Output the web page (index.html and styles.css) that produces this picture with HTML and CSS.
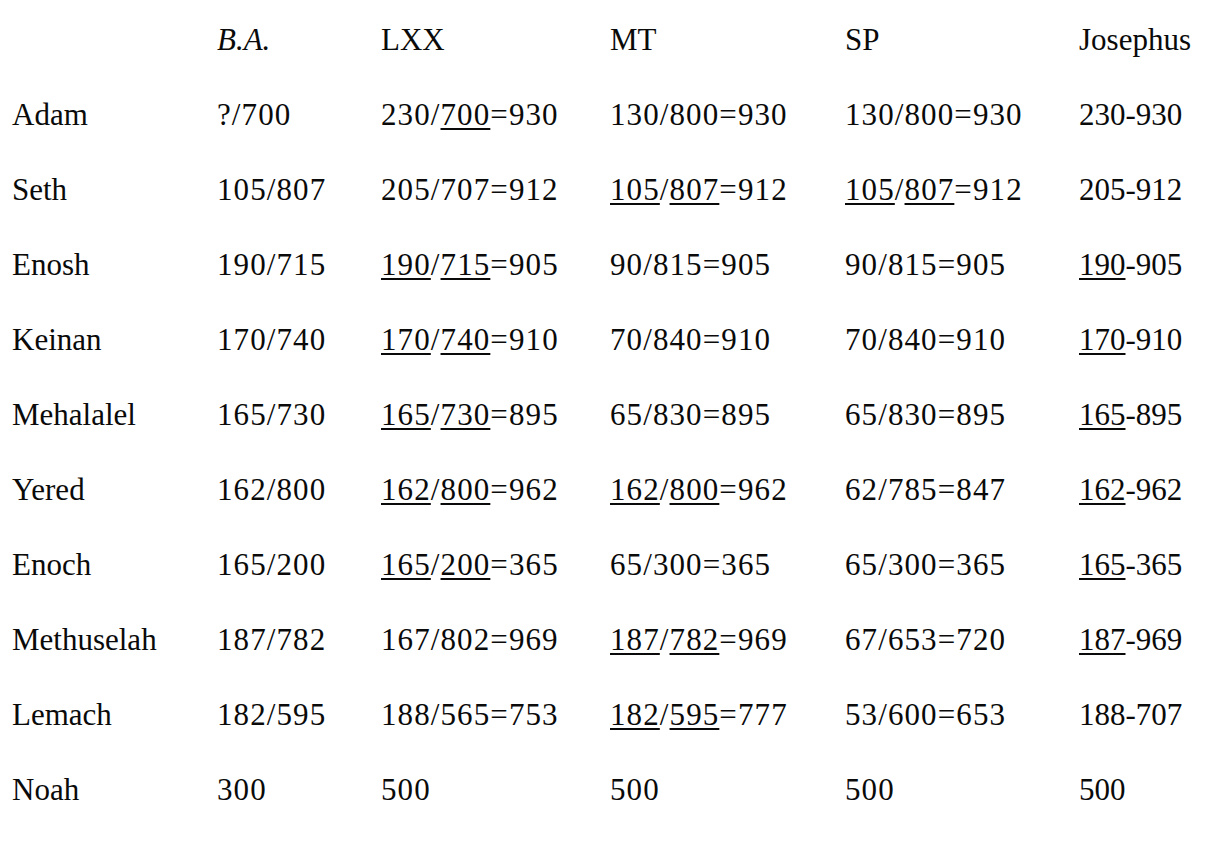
FILE: index.html
```html
<!DOCTYPE html>
<html>
<head>
<meta charset="utf-8">
<link rel="stylesheet" href="styles.css">
</head>
<body>
<div class="table">
  <div class="row head">
    <div class="cell"></div>
    <div class="cell"><i>B.A.</i></div>
    <div class="cell">LXX</div>
    <div class="cell">MT</div>
    <div class="cell">SP</div>
    <div class="cell">Josephus</div>
  </div>
  <div class="row">
    <div class="cell">Adam</div>
    <div class="cell">?/700</div>
    <div class="cell">230/<u>700</u>=930</div>
    <div class="cell">130/800=930</div>
    <div class="cell">130/800=930</div>
    <div class="cell">230-930</div>
  </div>
  <div class="row">
    <div class="cell">Seth</div>
    <div class="cell">105/807</div>
    <div class="cell">205/707=912</div>
    <div class="cell"><u>105</u>/<u>807</u>=912</div>
    <div class="cell"><u>105</u>/<u>807</u>=912</div>
    <div class="cell">205-912</div>
  </div>
  <div class="row">
    <div class="cell">Enosh</div>
    <div class="cell">190/715</div>
    <div class="cell"><u>190</u>/<u>715</u>=905</div>
    <div class="cell">90/815=905</div>
    <div class="cell">90/815=905</div>
    <div class="cell"><u>190</u>-905</div>
  </div>
  <div class="row">
    <div class="cell">Keinan</div>
    <div class="cell">170/740</div>
    <div class="cell"><u>170</u>/<u>740</u>=910</div>
    <div class="cell">70/840=910</div>
    <div class="cell">70/840=910</div>
    <div class="cell"><u>170</u>-910</div>
  </div>
  <div class="row">
    <div class="cell">Mehalalel</div>
    <div class="cell">165/730</div>
    <div class="cell"><u>165</u>/<u>730</u>=895</div>
    <div class="cell">65/830=895</div>
    <div class="cell">65/830=895</div>
    <div class="cell"><u>165</u>-895</div>
  </div>
  <div class="row">
    <div class="cell">Yered</div>
    <div class="cell">162/800</div>
    <div class="cell"><u>162</u>/<u>800</u>=962</div>
    <div class="cell"><u>162</u>/<u>800</u>=962</div>
    <div class="cell">62/785=847</div>
    <div class="cell"><u>162</u>-962</div>
  </div>
  <div class="row">
    <div class="cell">Enoch</div>
    <div class="cell">165/200</div>
    <div class="cell"><u>165</u>/<u>200</u>=365</div>
    <div class="cell">65/300=365</div>
    <div class="cell">65/300=365</div>
    <div class="cell"><u>165</u>-365</div>
  </div>
  <div class="row">
    <div class="cell">Methuselah</div>
    <div class="cell">187/782</div>
    <div class="cell">167/802=969</div>
    <div class="cell"><u>187</u>/<u>782</u>=969</div>
    <div class="cell">67/653=720</div>
    <div class="cell"><u>187</u>-969</div>
  </div>
  <div class="row">
    <div class="cell">Lemach</div>
    <div class="cell">182/595</div>
    <div class="cell">188/565=753</div>
    <div class="cell"><u>182</u>/<u>595</u>=777</div>
    <div class="cell">53/600=653</div>
    <div class="cell">188-707</div>
  </div>
  <div class="row">
    <div class="cell">Noah</div>
    <div class="cell">300</div>
    <div class="cell">500</div>
    <div class="cell">500</div>
    <div class="cell">500</div>
    <div class="cell">500</div>
  </div>
</div>
</body>
</html>
```
FILE: styles.css
```css
html, body {
  margin: 0;
  padding: 0;
  background: #ffffff;
}
body {
  font-family: "Liberation Serif", "Times New Roman", serif;
  font-size: 31px;
  color: #0a0a0a;
}
.table {
  padding: 2px 0 0 12px;
}
.row {
  display: grid;
  grid-template-columns: 205px 164px 229px 235px 234px auto;
  height: 75px;
  line-height: 75px;
  white-space: nowrap;
}
.row:not(.head) .cell:nth-child(n+2):nth-child(-n+5) {
  letter-spacing: 1.1px;
}
u {
  text-decoration: underline;
  text-decoration-thickness: 2px;
  text-underline-offset: 3px;
}
i {
  font-style: italic;
}
```
